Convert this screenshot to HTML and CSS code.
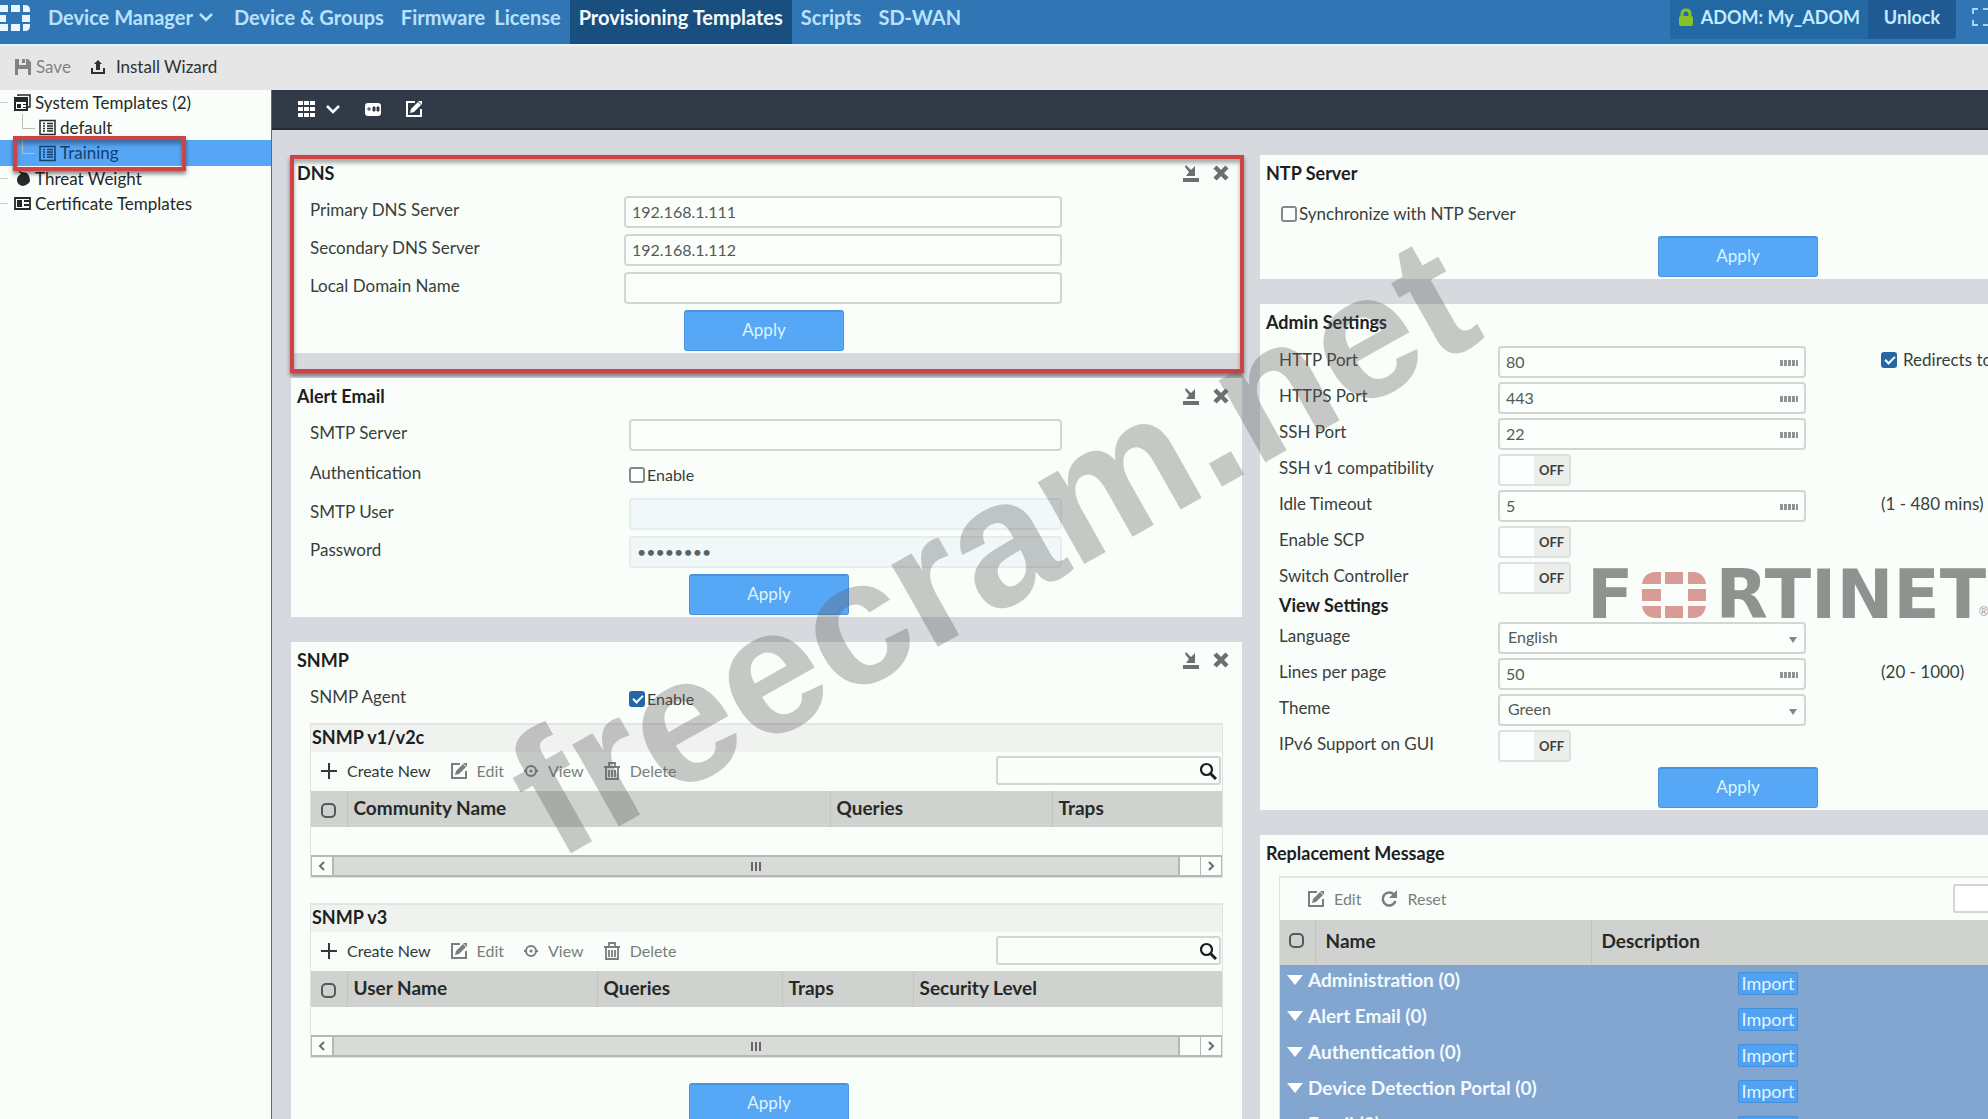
FILE: index.html
```html
<!DOCTYPE html>
<html lang="en">
<head>
<meta charset="utf-8">
<title>Provisioning Templates</title>
<link rel="stylesheet" href="styles.css">
</head>
<body>
<svg class="defs" aria-hidden="true">
  <symbol id="i-edit" viewBox="0 0 18 18"><path d="M10 2H2v14h14V9" fill="none" stroke="currentColor" stroke-width="2"/><path d="M5 13l1-4 7-7 3 3-7 7z" fill="currentColor"/><path d="M13 1l4 0v4z" fill="currentColor"/></symbol>
  <symbol id="i-plus" viewBox="0 0 18 18"><path d="M9 1v16M1 9h16" stroke="currentColor" stroke-width="2"/></symbol>
  <symbol id="i-view" viewBox="0 0 16 16"><circle cx="8" cy="8" r="5" fill="none" stroke="currentColor" stroke-width="2"/><circle cx="8" cy="8" r="1.500" fill="currentColor"/><path d="M1 8h2M13 8h2" stroke="currentColor" stroke-width="2"/></symbol>
  <symbol id="i-trash" viewBox="0 0 18 18"><path d="M1 5h16M6 5V1h6v4M3 5v12h12V5M6 8v7M9 8v7M12 8v7" fill="none" stroke="currentColor" stroke-width="1.800"/></symbol>
  <symbol id="i-search" viewBox="0 0 18 18"><circle cx="7.500" cy="7.500" r="5.500" fill="none" stroke="currentColor" stroke-width="2.200"/><path d="M11 11l6 6" stroke="currentColor" stroke-width="3"/></symbol>
  <symbol id="i-min" viewBox="0 0 18 18"><path d="M1 14h16v4H1z" fill="currentColor"/><path d="M4 1l5 5 4-4v10H4l3-4-4-5z" fill="currentColor"/></symbol>
  <symbol id="i-close" viewBox="0 0 18 18"><path d="M3 3l12 12M15 3L3 15" stroke="currentColor" stroke-width="4.500"/></symbol>
  <symbol id="i-down" viewBox="0 0 16 16"><path d="M2 5l6 6 6-6" fill="none" stroke="currentColor" stroke-width="2.500"/></symbol>
  <symbol id="i-list" viewBox="0 0 17 16"><path d="M1 1h15v14H1z" fill="none" stroke="currentColor" stroke-width="1.500"/><path d="M4 4h2M4 6.500h2M4 9h2M4 11.500h2M8 4h6M8 6.500h6M8 9h6M8 11.500h6" stroke="currentColor" stroke-width="1.500"/></symbol>
  <symbol id="i-keys" viewBox="0 0 18 6"><path d="M0 1h18M0 3h18M0 5h18" stroke="currentColor" stroke-width="2" stroke-dasharray="3 1"/></symbol>
</svg>

<div class="app">
  <header class="topbar">
    <svg class="brand" viewBox="0 0 30 26" aria-hidden="true"><path d="M0 0h8v7H0zM11 0h9v7h-9zM23 0h2q5 0 5 5v2h-7zM0 10h6v7H0zM22 10h8v7h-8zM0 19h8v7H0zM11 19h9v7h-9zM23 19h7v2q0 5-5 5h-2z" fill="#e9f6ff"/></svg>
    <nav class="nav">
      <a class="menu" href="#">Device Manager <svg class="i16"><use href="#i-down"/></svg></a>
      <a class="groups" href="#">Device &amp; Groups</a>
      <a class="firmware" href="#">Firmware</a>
      <a class="license" href="#">License</a>
      <a class="active" href="#">Provisioning Templates</a>
      <a class="scripts" href="#">Scripts</a>
      <a href="#">SD-WAN</a>
    </nav>
    <div class="adom"><svg class="lock" viewBox="0 0 16 18"><path d="M4 9V6q0-4 4-4t4 4v3" fill="none" stroke="#86c02a" stroke-width="3"/><rect x="1" y="8" width="14" height="10" rx="2" fill="#86c02a"/></svg>ADOM: My_ADOM</div>
    <button class="unlock">Unlock</button>
    <svg class="expand" viewBox="0 0 16 18" aria-hidden="true"><path d="M6 1H1v5M1 12v5h5M11 1h5M11 17h5" fill="none" stroke="#a8d4f5" stroke-width="2"/></svg>
  </header>

  <div class="toolbar">
    <button class="tool muted"><svg class="i16" viewBox="0 0 16 16"><path d="M0 0h4v6h7V0h2l3 3v13h-3v-6H3v6H0zM7 0h3v4H7z" fill="currentColor"/></svg>Save</button>
    <button class="tool wizard"><svg class="i14" viewBox="0 0 14 14"><path d="M1 8v5h12V8" fill="none" stroke="currentColor" stroke-width="2"/><path d="M7 0l4 4H9v6H5V4H3z" fill="currentColor"/></svg>Install Wizard</button>
  </div>

  <div class="body">
    <aside class="tree">
      <a class="node" href="#"><svg class="i17" viewBox="0 0 17 17"><path d="M4 2V1h12v12h-2" fill="none" stroke="currentColor" stroke-width="1.500"/><path d="M1 4h12v12H1z" fill="none" stroke="currentColor" stroke-width="2"/><path d="M1 5h12v3H1zM3 10h4v4H3zM9 10h3v1H9zM9 13h3v1H9z" fill="currentColor"/></svg>System Templates (2)</a>
      <a class="node child" href="#"><svg class="i17"><use href="#i-list"/></svg>default</a>
      <a class="node child selected" href="#"><svg class="i17"><use href="#i-list"/></svg>Training<span class="mark mark-tree"></span></a>
      <a class="node" href="#"><svg class="i17" viewBox="0 0 17 17"><path d="M7 4L4 1l4 1 5 1q3 3 3 7t-7 6q-6-1-6-6 0-4 4-6z" fill="currentColor"/></svg>Threat Weight</a>
      <a class="node" href="#"><svg class="i17" viewBox="0 0 17 17"><path d="M1 3h15v11H1z" fill="none" stroke="currentColor" stroke-width="1.800"/><path d="M3 5h5v7H3zM10 5h5v2h-5zM10 9h5v2h-5z" fill="currentColor"/></svg>Certificate Templates</a>
    </aside>

    <main class="main">
      <div class="viewbar">
        <button aria-label="Layout"><svg class="i17" viewBox="0 0 17 17"><path d="M0 0h5v4H0zM6 0h5v4H6zM12 0h5v4h-5zM0 6h5v4H0zM6 6h5v4H6zM12 6h5v4h-5zM0 12h5v4H0zM6 12h5v4H6zM12 12h5v4h-5z" fill="currentColor"/></svg></button>
        <button aria-label="Layout options"><svg class="i16"><use href="#i-down"/></svg></button>
        <button class="fit" aria-label="Fit"><svg class="i16" viewBox="0 0 16 16"><rect x="0" y="2" width="16" height="13" rx="3" fill="currentColor"/><path d="M2 8h4M4 6v4M8 6h2v4H8zM12 6h2v4h-2z" stroke="#303b47" fill="#303b47"/></svg></button>
        <button class="modify" aria-label="Edit"><svg class="i18"><use href="#i-edit"/></svg></button>
      </div>

      <div class="columns">
        <div class="column">
          <section class="card dns">
            <header class="card-head"><h2>DNS</h2><button aria-label="Minimize"><svg class="i18"><use href="#i-min"/></svg></button><button aria-label="Close"><svg class="i18"><use href="#i-close"/></svg></button></header>
            <div class="row"><label for="dns1">Primary DNS Server</label><input id="dns1" class="field" type="text" value="192.168.1.111"></div>
            <div class="row"><label for="dns2">Secondary DNS Server</label><input id="dns2" class="field" type="text" value="192.168.1.112"></div>
            <div class="row"><label for="domain">Local Domain Name</label><input id="domain" class="field" type="text"></div>
            <button class="apply">Apply</button>
            <span class="mark mark-dns"></span>
          </section>

          <section class="card">
            <header class="card-head"><h2>Alert Email</h2><button aria-label="Minimize"><svg class="i18"><use href="#i-min"/></svg></button><button aria-label="Close"><svg class="i18"><use href="#i-close"/></svg></button></header>
            <div class="row"><label for="smtp">SMTP Server</label><input id="smtp" class="field" type="text"></div>
            <div class="row tall"><span>Authentication</span><label class="check"><input type="checkbox">Enable</label></div>
            <div class="row"><label for="user">SMTP User</label><input id="user" class="field" type="text" disabled></div>
            <div class="row"><label for="pass">Password</label><input id="pass" class="field" type="password" value="password" disabled></div>
            <button class="apply">Apply</button>
          </section>

          <section class="card">
            <header class="card-head"><h2>SNMP</h2><button aria-label="Minimize"><svg class="i18"><use href="#i-min"/></svg></button><button aria-label="Close"><svg class="i18"><use href="#i-close"/></svg></button></header>
            <div class="row"><span>SNMP Agent</span><label class="check"><input type="checkbox" checked>Enable</label></div>
            <div class="panel">
              <h3>SNMP v1/v2c</h3>
              <div class="actions">
                <button class="strong"><svg class="i18"><use href="#i-plus"/></svg>Create New</button>
                <button><svg class="i18"><use href="#i-edit"/></svg>Edit</button>
                <button><svg class="i16"><use href="#i-view"/></svg>View</button>
                <button><svg class="i18"><use href="#i-trash"/></svg>Delete</button>
                <div class="search"><input type="text" aria-label="Search communities"><svg class="i18"><use href="#i-search"/></svg></div>
              </div>
              <table class="grid">
                <colgroup><col style="width:36px"><col style="width:483px"><col style="width:222px"><col></colgroup>
                <thead><tr><th class="pick"><input type="checkbox" aria-label="Select all"></th><th>Community Name</th><th>Queries</th><th>Traps</th></tr></thead>
                <tbody><tr><td colspan="4"></td></tr></tbody>
              </table>
              <div class="scroll"><button aria-label="Scroll left"><svg viewBox="0 0 8 10"><path d="M6 1L2 5l4 4" fill="none" stroke="currentColor" stroke-width="2"/></svg></button><div class="thumb"><i></i></div><div class="track"></div><button aria-label="Scroll right"><svg viewBox="0 0 8 10"><path d="M2 1l4 4-4 4" fill="none" stroke="currentColor" stroke-width="2"/></svg></button></div>
            </div>
            <div class="panel">
              <h3>SNMP v3</h3>
              <div class="actions">
                <button class="strong"><svg class="i18"><use href="#i-plus"/></svg>Create New</button>
                <button><svg class="i18"><use href="#i-edit"/></svg>Edit</button>
                <button><svg class="i16"><use href="#i-view"/></svg>View</button>
                <button><svg class="i18"><use href="#i-trash"/></svg>Delete</button>
                <div class="search"><input type="text" aria-label="Search users"><svg class="i18"><use href="#i-search"/></svg></div>
              </div>
              <table class="grid">
                <colgroup><col style="width:36px"><col style="width:250px"><col style="width:185px"><col style="width:131px"><col></colgroup>
                <thead><tr><th class="pick"><input type="checkbox" aria-label="Select all"></th><th>User Name</th><th>Queries</th><th>Traps</th><th>Security Level</th></tr></thead>
                <tbody><tr><td colspan="5"></td></tr></tbody>
              </table>
              <div class="scroll"><button aria-label="Scroll left"><svg viewBox="0 0 8 10"><path d="M6 1L2 5l4 4" fill="none" stroke="currentColor" stroke-width="2"/></svg></button><div class="thumb"><i></i></div><div class="track"></div><button aria-label="Scroll right"><svg viewBox="0 0 8 10"><path d="M2 1l4 4-4 4" fill="none" stroke="currentColor" stroke-width="2"/></svg></button></div>
            </div>
            <button class="apply">Apply</button>
          </section>
        </div>

        <div class="column">
          <section class="card">
            <header class="card-head"><h2>NTP Server</h2></header>
            <div class="ntp"><label class="check"><input type="checkbox">Synchronize with NTP Server</label></div>
            <button class="apply">Apply</button>
          </section>

          <section class="card">
            <header class="card-head"><h2>Admin Settings</h2></header>
            <div class="settings">
              <label for="http">HTTP Port</label><div class="num"><input id="http" class="field" type="text" value="80"><svg><use href="#i-keys"/></svg></div><label class="check note"><input type="checkbox" checked>Redirects to</label>
              <label for="https">HTTPS Port</label><div class="num"><input id="https" class="field" type="text" value="443"><svg><use href="#i-keys"/></svg></div>
              <label for="ssh">SSH Port</label><div class="num"><input id="ssh" class="field" type="text" value="22"><svg><use href="#i-keys"/></svg></div>
              <span>SSH v1 compatibility</span><button class="toggle" aria-label="SSH v1 compatibility">OFF</button>
              <label for="idle">Idle Timeout</label><div class="num"><input id="idle" class="field" type="text" value="5"><svg><use href="#i-keys"/></svg></div><span class="note">(1 - 480 mins)</span>
              <span>Enable SCP</span><button class="toggle" aria-label="Enable SCP">OFF</button>
              <span>Switch Controller</span><button class="toggle" aria-label="Switch Controller">OFF</button>
              <h3>View Settings</h3>
              <label for="lang">Language</label><div class="pickone"><select id="lang" class="field"><option>English</option></select></div>
              <label for="lines">Lines per page</label><div class="num"><input id="lines" class="field" type="text" value="50"><svg><use href="#i-keys"/></svg></div><span class="note">(20 - 1000)</span>
              <label for="theme">Theme</label><div class="pickone"><select id="theme" class="field"><option>Green</option></select></div>
              <span>IPv6 Support on GUI</span><button class="toggle" aria-label="IPv6 Support on GUI">OFF</button>
            </div>
            <button class="apply">Apply</button>
          </section>

          <section class="card">
            <header class="card-head"><h2>Replacement Message</h2></header>
            <div class="panel messages">
              <div class="actions">
                <button><svg class="i18"><use href="#i-edit"/></svg>Edit</button>
                <button><svg class="i18" viewBox="0 0 18 18"><path d="M14 4.500A6.500 6.500 0 1 0 15.500 11" fill="none" stroke="currentColor" stroke-width="2.500"/><path d="M17 0v8H9z" fill="currentColor"/></svg>Reset</button>
                <input class="find" type="text" aria-label="Search messages">
              </div>
              <table class="grid">
                <colgroup><col style="width:35px"><col style="width:276px"><col></colgroup>
                <thead><tr><th class="pick"><input type="checkbox" aria-label="Select all"></th><th>Name</th><th>Description</th></tr></thead>
                <tbody>
                  <tr><td colspan="2"><i class="caret"></i>Administration (0)</td><td><button class="import">Import</button></td></tr>
                  <tr><td colspan="2"><i class="caret"></i>Alert Email (0)</td><td><button class="import">Import</button></td></tr>
                  <tr><td colspan="2"><i class="caret"></i>Authentication (0)</td><td><button class="import">Import</button></td></tr>
                  <tr><td colspan="2"><i class="caret"></i>Device Detection Portal (0)</td><td><button class="import">Import</button></td></tr>
                  <tr><td colspan="2"><i class="caret"></i>Email (0)</td><td><button class="import">Import</button></td></tr>
                </tbody>
              </table>
            </div>
          </section>
        </div>
      </div>
    </main>
  </div>

  <div class="fortinet">
    <span>F</span>
    <svg viewBox="0 0 64 46" aria-hidden="true"><path d="M0 12Q2 0 14 0h5v12zM23 0h18v12H23zM46 0h5q11 0 13 12H46zM0 17h19v12H0zM46 17h18v12H46zM0 34h19v12h-5Q2 46 0 34zM23 34h18v12H23zM46 34h18q-2 12-13 12h-5z" fill="#d99b95"/></svg>
    <span>RTINET</span><small>®</small>
  </div>
  <div class="watermark">freecram.net</div>
</div>
</body>
</html>
```
FILE: styles.css
```css
* { box-sizing: border-box; }
body { margin: 0; font: 16px/20px Lato, "Liberation Sans", sans-serif; color: #3a3e3c; }
button, input, select { font: inherit; color: inherit; }
button { padding: 0; border: 0; background: none; }
a { color: inherit; text-decoration: none; }
h2, h3 { margin: 0; font-size: 18px; line-height: 20px; font-weight: 700; color: #1d201e; }
svg { display: block; flex: none; }
.defs { position: absolute; width: 0; height: 0; }
.i14 { width: 14px; height: 14px; }
.i16 { width: 16px; height: 16px; }
.i17 { width: 17px; height: 17px; }
.i18 { width: 18px; height: 18px; }

.app { position: relative; height: 100vh; overflow: hidden; display: flex; flex-direction: column; background: #f9fefa; }

/* top bar */
.topbar { display: flex; flex: none; height: 46px; background: #3076b4; border-bottom: 2px solid #e4f4fa; color: #b9e2ff; font-size: 18px; font-weight: 700; white-space: nowrap; }
.brand { width: 30px; height: 26px; margin: 5px 18px 0 0; }
.nav { display: flex; flex: 1; font-size: 20px; }
.nav a { padding: 7px 0; }
.nav .menu { display: flex; align-items: center; gap: 5px; height: 34px; margin-right: 20px; }
.nav .groups { margin-right: 17px; }
.nav .firmware, .nav .license { margin-right: 9px; }
.nav .active { padding: 7px 9px; margin-right: 9px; background: #184f7f; color: #f4fbff; }
.nav .scripts { margin-right: 17px; }
.adom { display: flex; align-items: center; gap: 7px; height: 39px; padding: 0 8px 5px; background: #2269a3; color: #c5eaff; }
.lock { width: 16px; height: 18px; }
.unlock { width: 88px; height: 39px; padding-bottom: 5px; background: #1f5a94; color: #c5eaff; border-radius: 0 0 3px 0; }
.expand { width: 16px; height: 18px; margin: 8px 0 0 16px; }

.toolbar { display: flex; flex: none; align-items: center; gap: 20px; height: 44px; padding: 0 15px 3px; background: #e6e6e6; }
.tool { display: flex; align-items: center; gap: 5px; font-size: 17px; color: #2e3130; }
.tool.muted { color: #808382; }
.tool.wizard { gap: 11px; }

.body { display: flex; flex: 1; min-height: 0; }

/* template tree */
.tree { flex: none; width: 272px; border-right: 1px solid #3c73a8; font-size: 17px; }
.node { position: relative; display: flex; align-items: center; gap: 4px; height: 25px; padding-left: 14px; color: #262928; white-space: nowrap; }
.node::before { content: ""; position: absolute; left: 0; top: 12px; width: 8px; border-top: 1px solid #c9cecb; }
.node.child { padding-left: 39px; }
.node.child::before { left: 22px; top: -1px; width: 12px; height: 14px; border: solid #b9bebb; border-width: 0 0 1px 1px; }
.node.selected { height: 26px; background: #56a6f5; color: #14406c; }
.mark { position: absolute; border: 4px solid #cf4347; box-shadow: 0 3px 4px #0007, inset 0 4px 4px #0005; pointer-events: none; }
.mark-tree { left: 13px; top: -4px; width: 173px; height: 35px; z-index: 1; }
.mark-dns { inset: 0 -2px -20px -1px; }

/* working area */
.main { flex: 1; min-width: 0; overflow: hidden; background: #d7d9df; }
.viewbar { display: flex; align-items: center; height: 40px; padding-left: 26px; background: #303b47; border-bottom: 2px solid #222c37; color: #fff; }
.viewbar button { margin-right: 10px; }
.viewbar .fit { margin: 0 24px 0 14px; }
.columns { display: grid; grid-template-columns: minmax(0, 951fr) minmax(0, 728fr); gap: 18px; align-items: start; padding: 25px 0 0 19px; }
.column { display: flex; flex-direction: column; gap: 25px; }
.card { position: relative; padding-bottom: 2px; background: #f9fefa; }
.card-head { display: flex; align-items: center; gap: 12px; height: 38px; padding: 0 12px 2px 6px; color: #6c706e; }
.card-head h2 { flex: 1; }
.row { display: grid; grid-template-columns: 319px 433px; align-items: center; height: 38px; padding-left: 19px; }
.row.tall { height: 41px; }
.dns .row { grid-template-columns: 314px 438px; }
.row > :first-child { padding-bottom: 4px; font-size: 17px; }
.field { display: block; width: 100%; height: 32px; padding: 0 6px 2px; border: 2px solid #d3d6d3; border-radius: 4px; background: #fbfffc; outline: 0; color: #555957; }
.field:disabled { border-color: #e6edec; background: #f1f8f9; color: #5d6260; }
.apply { display: block; width: 160px; height: 41px; margin: 3px 0 0 398px; padding-bottom: 3px; border: 1px solid #4a93dd; border-top-width: 2px; border-radius: 3px; background: #57a7f7; color: #dff4ff; font-size: 17px; }
.dns .apply { margin-left: 393px; }
.check { display: flex; align-items: center; gap: 2px; white-space: nowrap; }
input[type="checkbox"] { flex: none; appearance: none; width: 16px; height: 16px; margin: 0; border: 2px solid #7b8c8a; border-radius: 3px; background: #fff; }
input[type="checkbox"]:checked { border-color: #2567a5; background: #2567a5; }
input[type="checkbox"]:checked::after { content: ""; display: block; width: 4px; height: 8px; margin: 0 0 0 4px; border: solid #fff; border-width: 0 2px 2px 0; transform: rotate(45deg); }

/* tables with their own tool row */
.panel { margin: 5px 19px 25px; border: 1px solid #dfe2df; border-top: 2px solid #e2e5e2; }
.panel + .panel { margin-top: 0; }
.panel h3 { height: 27px; padding: 2px 1px; background: #f0f2f0; }
.actions { display: flex; align-items: center; gap: 19px; height: 39px; padding: 0 1px 2px 9px; color: #7a7e7c; }
.actions button { display: flex; align-items: center; gap: 9px; }
.actions .strong { color: #343836; }
.search { display: flex; align-items: center; width: 225px; height: 29px; margin-left: auto; padding-right: 2px; border: 2px solid #d3d6d3; border-radius: 3px; color: #1c1f1e; }
.search input { flex: 1; min-width: 0; border: 0; outline: 0; background: none; }
.grid { width: 100%; border-collapse: collapse; table-layout: fixed; }
.grid th { height: 36px; padding: 0 0 3px 6px; border-left: 1px solid #c2c6c3; background: #cfd2cf; color: #262928; text-align: left; font-size: 19px; }
.grid th.pick { padding: 2px 0 0 10px; border-left: 0; }
.grid .pick input { display: block; width: 15px; height: 15px; border-color: #555a57; border-radius: 5px; background: none; }
.grid td { height: 28px; padding: 0; }
.scroll { display: flex; height: 22px; border: 2px solid #b5b8b5; border-width: 2px 1px; color: #6a6e6b; }
.scroll button { display: grid; place-items: center; width: 20px; }
.scroll svg { width: 8px; height: 10px; }
.thumb { display: grid; place-items: center; flex: 1; border: solid #b5b8b5; border-width: 0 2px; background: #d8dbd8; }
.thumb i { width: 10px; height: 9px; background: repeating-linear-gradient(90deg, #666 0 2px, #d8dbd8 2px 4px); }
.track { width: 21px; border-right: 1px solid #b5b8b5; }

/* right column */
.ntp { height: 40px; padding: 11px 0 0 21px; font-size: 17px; }
.settings { display: grid; grid-template-columns: 219px 308px auto; row-gap: 4px; align-items: center; padding: 4px 0 2px 19px; }
.settings > :first-child, .settings > label, .settings > span { grid-column: 1; padding-bottom: 5px; font-size: 17px; white-space: nowrap; }
.settings > .note { grid-column: 3; padding-left: 75px; }
.settings > .check { gap: 6px; }
.settings h3 { grid-column: 1 / -1; padding-bottom: 6px; line-height: 14px; }
.num, .pickone { position: relative; }
.num svg { position: absolute; right: 8px; top: 14px; width: 18px; height: 6px; color: #8f9391; }
.pickone select { appearance: none; padding-left: 8px; }
.pickone::after { content: ""; position: absolute; right: 9px; top: 15px; border: 4px solid transparent; border-top: 6px solid #858987; border-bottom: 0; }
.toggle { width: 73px; height: 32px; padding-left: 34px; border: 2px solid #dfe1df; border-radius: 4px; background: linear-gradient(90deg, #fcfffd 50%, #eceeec 50%); font-size: 13px; font-weight: 700; }

.messages { margin: 3px 0 0 19px; border-right: 0; }
.messages .actions { height: 42px; padding: 0 0 1px 27px; }
.find { width: 35px; height: 29px; margin-left: auto; border: 2px solid #d3d6d3; border-right: 0; border-radius: 3px 0 0 3px; background: #fff; }
.messages th { height: 45px; padding-left: 10px; }
.messages th.pick { padding: 0 0 4px 9px; }
.messages tbody tr { background: #82a6d0; color: #f3faff; font-size: 19px; font-weight: 700; }
.messages td { height: 36px; padding: 0 0 6px 7px; }
.caret { display: inline-block; margin: 0 5px 2px 0; border: 8px solid transparent; border-top: 10px solid #fff; border-bottom: 0; }
.messages td + td { padding: 0 0 0 147px; }
.import { display: block; width: 60px; height: 23px; border: 1px solid #4590dc; border-radius: 2px; background: #51a2f2; color: #e2f5ff; font-size: 18px; font-weight: 400; line-height: 20px; }

/* marks laid over the page */
.fortinet { position: absolute; right: 0; top: 572px; display: flex; align-items: flex-end; gap: 9px; height: 46px; color: #909290; font: 700 68px/46px "DejaVu Sans", sans-serif; }
.fortinet svg { width: 64px; height: 46px; }
.fortinet small { font: 12px/12px "Liberation Sans", sans-serif; margin-left: -16px; }
.watermark { position: absolute; left: 570px; top: 708px; transform: rotate(-29.4deg); transform-origin: 0 100%; font: 700 178px/178px "Liberation Sans", Arial, sans-serif; color: rgba(90, 90, 90, .33); white-space: nowrap; pointer-events: none; }
```
